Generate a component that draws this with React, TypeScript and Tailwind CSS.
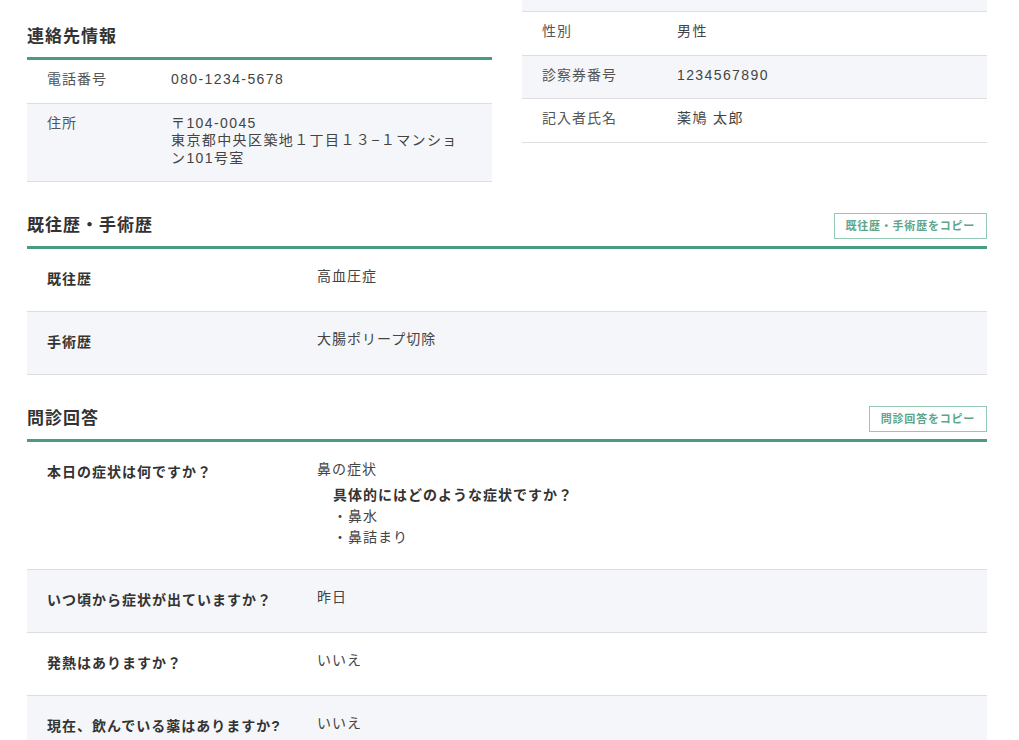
import { Fragment } from 'react';

type Pair = { label: string; value: string[] };

const contact: Pair[] = [
  { label: '電話番号', value: ['080-1234-5678'] },
  { label: '住所', value: ['〒104-0045', '東京都中央区築地１丁目１３−１マンション101号室'] },
];

const patient: Pair[] = [
  { label: '性別', value: ['男性'] },
  { label: '診察券番号', value: ['1234567890'] },
  { label: '記入者氏名', value: ['薬鳩 太郎'] },
];

const history: Pair[] = [
  { label: '既往歴', value: ['高血圧症'] },
  { label: '手術歴', value: ['大腸ポリープ切除'] },
];

const answers: Pair[] = [
  { label: 'いつ頃から症状が出ていますか？', value: ['昨日'] },
  { label: '発熱はありますか？', value: ['いいえ'] },
  { label: '現在、飲んでいる薬はありますか?', value: ['いいえ'] },
];

const SectionHead = ({ title, copy }: { title: string; copy?: string }) => (
  <div className="flex items-center justify-between h-[26px] mb-[7px]">
    <h2 className="text-[17px] font-bold tracking-[1px] text-[#333]">{title}</h2>
    {copy && (
      <button className="h-[26px] px-[11px] border border-[#93c8b4] bg-white text-[11px] font-bold tracking-[0.07em] text-[#5ea68b]">
        {copy}
      </button>
    )}
  </div>
);

const SmallTable = ({ rows, labelWidth }: { rows: Pair[]; labelWidth: string }) => (
  <div>
    {rows.map((r, i) => (
      <div
        key={r.label}
        className={`flex border-b border-[#dcdee2] pl-5 pr-[32px] pt-[11px] pb-[14px] leading-[17.5px] text-[14px] tracking-[1px] ${
          i % 2 === 1 ? 'bg-[#f5f6f9]' : 'bg-white'
        }`}
      >
        <div className={`${labelWidth} shrink-0 text-[#555]`}>{r.label}</div>
        <div className="text-[#444] tracking-[1.4px]">
          {r.value.map((v) => (
            <div key={v}>{v}</div>
          ))}
        </div>
      </div>
    ))}
  </div>
);

const WideRow = ({ label, gray, children }: { label: string; gray: boolean; children: React.ReactNode }) => (
  <div className={`flex border-b border-[#dcdee2] pl-5 text-[14px] tracking-[1px] leading-[21px] ${gray ? 'bg-[#f5f6f9]' : 'bg-white'}`}>
    <div className="w-[270px] shrink-0 pt-5 pb-[21px] font-bold text-[#333]">{label}</div>
    <div className="pt-[17px] pb-[21px] text-[#444]">{children}</div>
  </div>
);

export default function App() {
  return (
    <div className="min-h-screen bg-white font-['Liberation_Sans','Noto_Sans_CJK_JP',sans-serif] pl-[27px]">
      <div className="w-[960px]">
        <div className="grid grid-cols-2 gap-[30px]">
          <div className="pt-[24px]">
            <SectionHead title="連絡先情報" />
            <div className="border-t-[3px] border-[#4b9b82]">
              <SmallTable rows={contact} labelWidth="w-[124px]" />
            </div>
          </div>
          <div>
            <div className="h-[12px] bg-[#f5f6f9] border-b border-[#dcdee2]" />
            <SmallTable rows={patient} labelWidth="w-[135px]" />
          </div>
        </div>

        <div className="mt-[31px]">
          <SectionHead title="既往歴・手術歴" copy="既往歴・手術歴をコピー" />
          <div className="border-t-[3px] border-[#4b9b82]">
            {history.map((r, i) => (
              <WideRow key={r.label} label={r.label} gray={i % 2 === 1}>
                {r.value[0]}
              </WideRow>
            ))}
          </div>
        </div>

        <div className="mt-[31px]">
          <SectionHead title="問診回答" copy="問診回答をコピー" />
          <div className="border-t-[3px] border-[#4b9b82]">
            <WideRow label="本日の症状は何ですか？" gray={false}>
              <div>鼻の症状</div>
              <div className="pl-4 mt-[5px]">
                <div className="font-bold text-[#333]">具体的にはどのような症状ですか？</div>
                <div>・鼻水</div>
                <div>・鼻詰まり</div>
              </div>
            </WideRow>
            {answers.map((r, i) => (
              <Fragment key={r.label}>
                <WideRow label={r.label} gray={i % 2 === 0}>
                  {r.value[0]}
                </WideRow>
              </Fragment>
            ))}
          </div>
        </div>
      </div>
    </div>
  );
}
